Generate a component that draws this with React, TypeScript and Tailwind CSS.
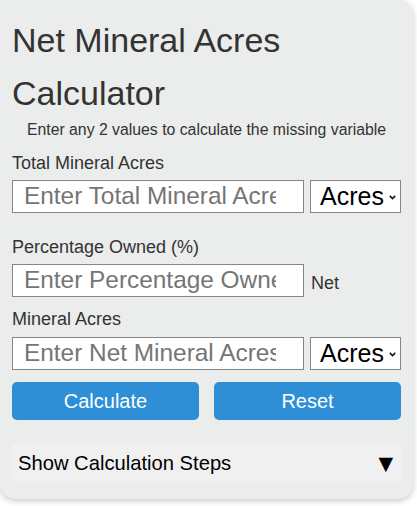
import React from "react";

const Chevron = () => (
  <svg
    className="pointer-events-none absolute right-[5px] top-[15px]"
    width="7"
    height="5"
    viewBox="0 0 7 5"
    fill="none"
  >
    <path d="M0.8 0.9 L3.5 3.6 L6.2 0.9" stroke="#111" strokeWidth="1.5" />
  </svg>
);

const UnitSelect = () => (
  <div className="relative ml-[6px] h-[33px] w-[91px]">
    <select
      defaultValue="Acres"
      className="h-full w-full appearance-none border border-[#858585] bg-white pl-[9px] text-[25px] leading-none text-black outline-none"
    >
      <option>Acres</option>
    </select>
    <Chevron />
  </div>
);

const inputCls =
  "h-[33px] w-[292px] border border-[#858585] bg-white pl-[11px] pr-[27px] text-[24.4px] text-black outline-none placeholder:text-[#757575]";

const labelCls = "text-[18px] leading-[20.7px] text-[#333]";

export default function App() {
  return (
    <div className="min-h-[506px] bg-white font-['Liberation_Sans',Arial,sans-serif]">
      <div className="w-[413px] rounded-[15px] rounded-tl-none bg-[#ebecec] px-3 pb-4 pt-[14px] shadow-[0_2px_6px_rgba(0,0,0,0.22)]">
        <h1 className="text-[34px] font-normal leading-[53px] text-[#333]">
          Net Mineral Acres Calculator
        </h1>
        <p className="mt-[0.7px] text-center text-[15.8px] leading-[18.2px] text-[#333]">
          Enter any 2 values to calculate the missing variable
        </p>

        <div className={`mt-[14.4px] ${labelCls}`}>Total Mineral Acres</div>
        <div className="mt-[6px] flex items-center">
          <input className={inputCls} placeholder="Enter Total Mineral Acres" />
          <UnitSelect />
        </div>

        <div className={`mt-[24.3px] ${labelCls}`}>Percentage Owned (%)</div>
        <div className="mt-[6px] flex items-center">
          <input className={inputCls} placeholder="Enter Percentage Owned" />
          <span className={`ml-[7px] mt-[5px] ${labelCls}`}>Net</span>
        </div>
        <div className={`mt-[12.3px] ${labelCls}`}>Mineral Acres</div>
        <div className="mt-[7px] flex items-center">
          <input className={inputCls} placeholder="Enter Net Mineral Acres" />
          <UnitSelect />
        </div>

        <div className="mt-[12px] flex w-[389px] gap-[15px]">
          <button className="h-[38px] flex-1 rounded-[5px] bg-[#2e8fd6] text-[20px] text-white">
            Calculate
          </button>
          <button className="h-[38px] flex-1 rounded-[5px] bg-[#2e8fd6] text-[20px] text-white">
            Reset
          </button>
        </div>

        <div className="mt-[23px] flex h-[40px] w-[389px] items-center justify-between rounded-[5px] bg-[#f0f0f0] pl-[6px] pr-[8px] text-[20.2px] text-black">
          <span>Show Calculation Steps</span>
          <span className="font-['DejaVu_Sans',sans-serif] text-[19px]">▼</span>
        </div>
      </div>
    </div>
  );
}
